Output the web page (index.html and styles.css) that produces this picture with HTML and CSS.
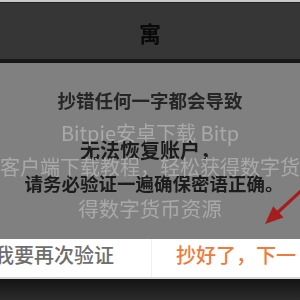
FILE: index.html
```html
<!DOCTYPE html>
<html lang="zh">
<head>
<meta charset="utf-8">
<link rel="stylesheet" href="styles.css">
</head>
<body>
<div class="screen">
  <div class="topline"></div>
  <header class="header"><span class="title">寓</span></header>
  <main class="content">
    <p class="msg msg1">抄错任何一字都会导致</p>
    <p class="msg msg2">无法恢复账户，</p>
    <p class="msg msg3">请务必验证一遍确保密语正确。</p>
    <div class="watermark">
      <p class="wm wm1">Bitpie安卓下载 Bitp</p>
      <p class="wm wm2">客户端下载教程，轻松获得数字货</p>
      <p class="wm wm3">得数字货币资源</p>
    </div>
    <svg class="arrow" width="45" height="55" viewBox="0 0 45 55">
      <line x1="46" y1="8" x2="21" y2="31" stroke="#a51d1d" stroke-width="3.2" stroke-linecap="round"/>
      <polygon points="10,41 28.5,34.5 18.2,23.2" fill="#a51d1d"/>
    </svg>
  </main>
  <div class="actions">
    <div class="btn btn-left"><span class="btn-text">我要再次验证</span></div>
    <div class="btn btn-right"><span class="btn-text">抄好了，下一</span></div>
  </div>
  <div class="bottombar"></div>
</div>
</body>
</html>
```

FILE: styles.css
```css
html, body {
  margin: 0;
  padding: 0;
  background: #808080;
}
.screen {
  width: 300px;
  height: 300px;
  overflow: hidden;
  display: flex;
  flex-direction: column;
  font-family: "Noto Sans CJK SC", "Noto Sans", sans-serif;
}
.topline {
  height: 2px;
  background: #c9c9c9;
  flex: none;
}
.header {
  flex: none;
  height: 56px;
  background: #363636;
  border-top: 1px solid #222;
  border-bottom: 4px solid #171717;
  display: flex;
  align-items: center;
  justify-content: center;
}
.title {
  font-size: 22px;
  color: #0a0a0a;
  font-weight: 700;
  line-height: 1;
  margin-top: 2px;
  filter: blur(0.3px);
}
.content {
  flex: none;
  height: 176px;
  background: #808080;
  position: relative;
  display: flex;
  flex-direction: column;
  align-items: center;
}
.msg {
  margin: 0;
  color: #1c1c1c;
  font-weight: 700;
  text-align: center;
  white-space: nowrap;
  filter: blur(0.5px);
}
.msg1 {
  font-size: 18.5px;
  line-height: 24px;
  margin-top: 25px;
  color: #262626;
}
.msg2 {
  font-size: 20px;
  line-height: 24px;
  margin-top: 26px;
}
.msg3 {
  font-size: 18.5px;
  line-height: 24px;
  margin-top: 9px;
  padding-left: 8px;
}
.watermark {
  position: absolute;
  left: 0;
  top: 0;
  width: 300px;
  display: flex;
  flex-direction: column;
  align-items: center;
}
.wm {
  margin: 0;
  color: #a9a9a9;
  font-size: 20px;
  line-height: 24px;
  white-space: nowrap;
  text-align: center;
  filter: blur(0.3px);
}
.wm1 { margin-top: 58px; }
.wm2 { margin-top: 10px; }
.wm3 { margin-top: 17px; font-size: 20.5px; }
.arrow {
  position: absolute;
  right: 0;
  top: 120px;
}
.actions {
  flex: none;
  height: 38px;
  background: #fff;
  display: flex;
  border-bottom: 2px solid #d6d6d6;
}
.btn {
  display: flex;
  align-items: center;
  overflow: hidden;
  white-space: nowrap;
  font-size: 20px;
  line-height: 24px;
  padding-bottom: 6px;
  box-sizing: border-box;
}
.btn-left {
  flex: 0 0 152px;
  border-right: 1px solid #f0f0f0;
  color: #6e6e6e;
  font-weight: 500;
}
.btn-left .btn-text {
  margin-left: -6px;
}
.btn-right {
  flex: 1;
  padding-left: 24px;
  color: #f07a3a;
  font-weight: 500;
}
.bottombar {
  flex: 1;
  background: linear-gradient(#141414, #2b2b2b);
}
```
